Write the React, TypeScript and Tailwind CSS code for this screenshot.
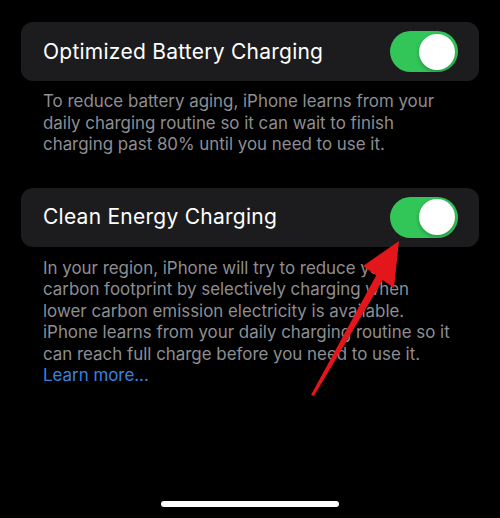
function Toggle() {
  return (
    <div className="relative h-[41px] w-[68px] rounded-full bg-[#32c659]">
      <div className="absolute right-[3px] top-[2.5px] h-[36px] w-[36px] rounded-full bg-white shadow-[0_2px_4px_rgba(0,0,0,0.25)]" />
    </div>
  );
}

function Row({ label }: { label: string }) {
  return (
    <div className="flex h-[59px] items-center justify-between rounded-[12px] bg-[#1c1c1e] pl-[22px] pr-[21px]">
      <span className="text-[21px] tracking-[0.25px] text-white">{label}</span>
      <Toggle />
    </div>
  );
}

export default function App() {
  return (
    <div
      className="relative flex h-[518px] w-[500px] flex-col overflow-hidden bg-black"
      style={{ fontFamily: 'Inter, "Open Sans", sans-serif' }}
    >
      <div className="flex flex-col px-[21px] pt-[22px]">
        <Row label="Optimized Battery Charging" />
        <p className="mt-[10px] pl-[22px] text-[16.9px] leading-[21.5px] text-[#8e8e93]">
          To reduce battery aging, iPhone learns from your
          <br />
          daily charging routine so it can wait to finish
          <br />
          charging past 80% until you need to use it.
        </p>
        <div className="mt-[32px]">
          <Row label="Clean Energy Charging" />
        </div>
        <p className="mt-[11px] pl-[22px] text-[16.9px] leading-[21.5px] text-[#8e8e93]">
          In your region, iPhone will try to reduce your
          <br />
          carbon footprint by selectively charging when
          <br />
          lower carbon emission electricity is available.
          <br />
          iPhone learns from your daily charging routine so it
          <br />
          can reach full charge before you need to use it.
          <br />
          <span className="text-[#3a82e0]">Learn more...</span>
        </p>
      </div>

      <div className="mt-auto mb-[11px] flex justify-center">
        <div className="h-[6px] w-[178px] rounded-full bg-white" />
      </div>

      <svg className="pointer-events-none absolute left-0 top-0" width="500" height="518" viewBox="0 0 500 518">
        <polygon points="311,395 314,396 384,278 377,274" fill="#e2161b" />
        <polygon points="399,241 363,266 394,288" fill="#e2161b" />
      </svg>
    </div>
  );
}
